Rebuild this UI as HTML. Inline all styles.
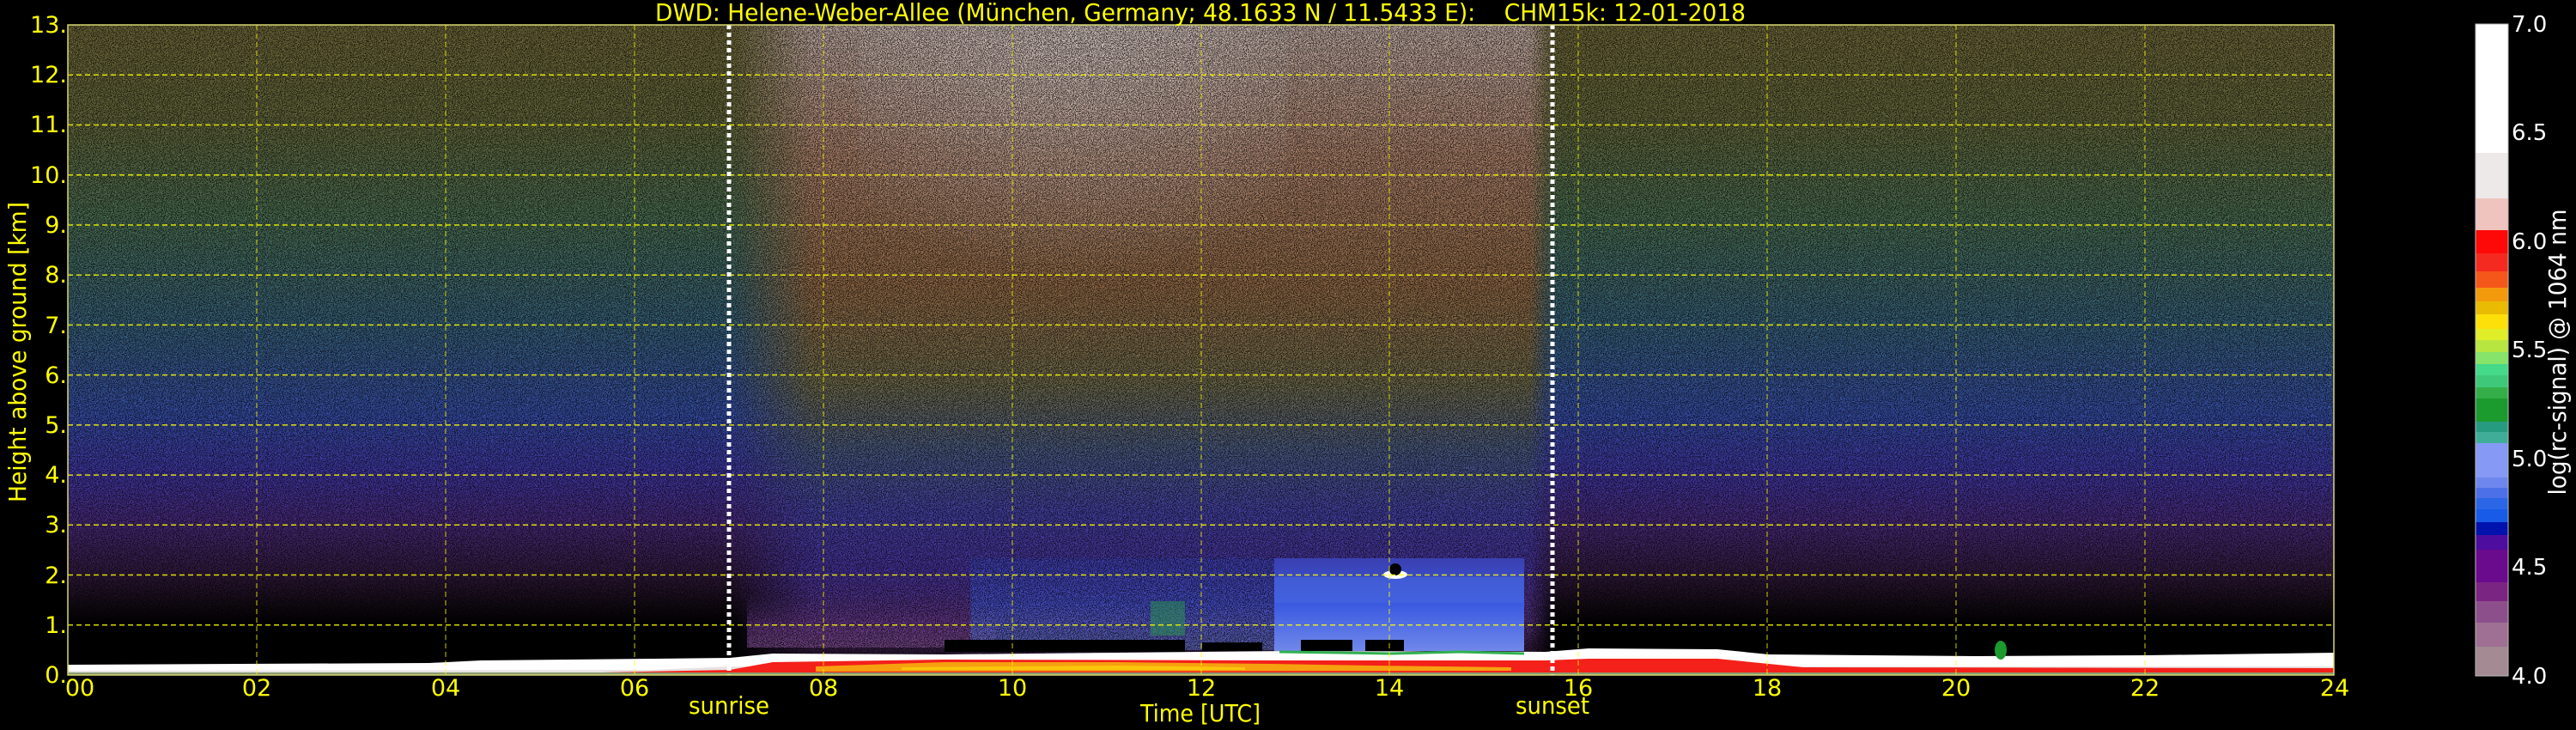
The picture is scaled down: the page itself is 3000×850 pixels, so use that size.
<!DOCTYPE html>
<html><head><meta charset="utf-8"><style>
html,body{margin:0;padding:0;background:#000;}
svg{display:block;}
text{font-family:"DejaVu Sans","Liberation Sans",sans-serif;}
</style></head><body>
<svg width="3000" height="850" viewBox="0 0 3000 850" xmlns="http://www.w3.org/2000/svg">
<defs>
<linearGradient id="night" x1="0" y1="29" x2="0" y2="786" gradientUnits="userSpaceOnUse">
<stop offset="0" stop-color="#6a6236"/>
<stop offset="0.15" stop-color="#5e6238"/>
<stop offset="0.3" stop-color="#46684e"/>
<stop offset="0.46" stop-color="#345c74"/>
<stop offset="0.6" stop-color="#344aa0"/>
<stop offset="0.69" stop-color="#3e349c"/>
<stop offset="0.77" stop-color="#462874"/>
<stop offset="0.85" stop-color="#2e1838"/>
<stop offset="0.9" stop-color="#0e080e"/>
<stop offset="0.925" stop-color="#000"/>
<stop offset="1" stop-color="#000"/>
</linearGradient>
<linearGradient id="day" x1="0" y1="29" x2="0" y2="786" gradientUnits="userSpaceOnUse">
<stop offset="0" stop-color="#b8a49c"/>
<stop offset="0.2" stop-color="#a27a64"/>
<stop offset="0.4" stop-color="#8a6442"/>
<stop offset="0.55" stop-color="#686446"/>
<stop offset="0.66" stop-color="#44547c"/>
<stop offset="0.75" stop-color="#423e9c"/>
<stop offset="0.84" stop-color="#443094"/>
<stop offset="0.92" stop-color="#52307a"/>
<stop offset="0.97" stop-color="#2a1530"/>
<stop offset="1" stop-color="#000"/>
</linearGradient>
<linearGradient id="dayMaskG" x1="0" y1="0" x2="1" y2="0">
<stop offset="0" stop-color="#fff" stop-opacity="0"/>
<stop offset="0.1" stop-color="#fff" stop-opacity="1"/>
<stop offset="0.97" stop-color="#fff" stop-opacity="1"/>
<stop offset="1" stop-color="#fff" stop-opacity="0"/>
</linearGradient>
<mask id="dayMask"><rect x="850" y="29" width="960" height="757" fill="url(#dayMaskG)"/></mask>
<radialGradient id="white" cx="0.5" cy="0" r="0.7">
<stop offset="0" stop-color="#d0c4c0" stop-opacity="0.7"/>
<stop offset="1" stop-color="#d0c4c0" stop-opacity="0"/>
</radialGradient>
<linearGradient id="blue" x1="0" y1="0" x2="0" y2="1">
<stop offset="0" stop-color="#3a40b0"/>
<stop offset="0.5" stop-color="#3a5ae0"/>
<stop offset="1" stop-color="#7088ea"/>
</linearGradient>
<linearGradient id="haze" x1="0" y1="0" x2="0" y2="1">
<stop offset="0" stop-color="#4a2a70" stop-opacity="0"/>
<stop offset="0.6" stop-color="#6a3a88"/>
<stop offset="1" stop-color="#7a4a8a"/>
</linearGradient>
<filter id="speck" x="0" y="0" width="100%" height="100%">
<feTurbulence type="fractalNoise" baseFrequency="0.95" numOctaves="1" seed="3"/>
<feColorMatrix type="matrix" values="0 0 0 0 0  0 0 0 0 0  0 0 0 0 0  12 0 0 0 -5.8"/>
<feComponentTransfer><feFuncA type="discrete" tableValues="0 1"/></feComponentTransfer>
</filter>
<filter id="speck2" x="0" y="0" width="100%" height="100%">
<feTurbulence type="fractalNoise" baseFrequency="0.8" numOctaves="1" seed="11"/>
<feColorMatrix type="matrix" values="0 0 0 0 0  0 0 0 0 0  0 0 0 0 0  0 12 0 0 -6.6"/>
<feComponentTransfer><feFuncA type="discrete" tableValues="0 1"/></feComponentTransfer>
</filter>
</defs>

<rect x="79" y="29" width="2639" height="757" fill="url(#night)"/>
<g mask="url(#dayMask)">
<rect x="850" y="29" width="960" height="757" fill="url(#day)"/>
</g>
<rect x="1000" y="29" width="500" height="420" fill="url(#white)"/>
<rect x="870" y="690" width="290" height="64" fill="url(#haze)" opacity="0.8"/>
<rect x="1130" y="650" width="354" height="107" fill="url(#blue)" opacity="0.6"/>
<rect x="79" y="29" width="2639" height="757" fill="#000" filter="url(#speck)" opacity="0.55"/>
<rect x="79" y="29" width="2639" height="757" fill="#000" filter="url(#speck2)" opacity="0.45"/>
<rect x="1484" y="650" width="291" height="108" fill="url(#blue)"/>
<rect x="1484" y="672" width="291" height="30" fill="#4868e0" opacity="0.6"/>
<rect x="1340" y="700" width="40" height="40" fill="#2a9a50" opacity="0.5"/>
<g fill="#000">
<rect x="1100" y="745" width="280" height="14"/>
<rect x="1400" y="748" width="70" height="10"/>
<rect x="1515" y="745" width="60" height="13"/>
<rect x="1590" y="745" width="45" height="13"/>
</g>

<polygon fill="#ffffff" points="79,774 500,772 560,769 760,767 850,766 900,761 1100,762 1300,760 1500,758 1800,759 1850,755 2000,756 2060,762 2300,764 2500,763 2718,760 2718,786 79,786"/>
<polygon fill="#e8e2e2" points="79,781 760,780 850,776 2718,776 2718,786 79,786"/>
<polygon fill="#f4201a" points="79,783 700,783 850,780 900,771 1100,768 1500,769 1800,769 1850,767 2000,767 2060,773 2100,777 2718,778 2718,786 79,786"/>
<polygon fill="#f6a010" points="950,776 1100,771 1300,771 1480,773 1600,775 1760,777 1760,781 950,782"/>
<polygon fill="#fde00a" opacity="0.6" points="1050,777 1300,775 1450,777 1450,780 1050,780"/>
<polyline fill="none" stroke="#30b050" stroke-width="3" points="1490,759 1560,760 1620,761 1700,759 1775,761"/>
<rect x="79" y="783" width="2639" height="3" fill="#8a9a70"/>
<ellipse cx="2330" cy="757" rx="7" ry="11" fill="#1b9a2e"/>
<ellipse cx="1625" cy="669" rx="14" ry="5" fill="#fff"/>
<ellipse cx="1625" cy="663" rx="7" ry="7" fill="#000"/>

<g stroke="#ffff00" stroke-width="1.5" stroke-dasharray="6,4" opacity="0.85">
<line x1="79" x2="2718" y1="727.8" y2="727.8"/>
<line x1="79" x2="2718" y1="669.5" y2="669.5"/>
<line x1="79" x2="2718" y1="611.3" y2="611.3"/>
<line x1="79" x2="2718" y1="553.1" y2="553.1"/>
<line x1="79" x2="2718" y1="494.9" y2="494.9"/>
<line x1="79" x2="2718" y1="436.6" y2="436.6"/>
<line x1="79" x2="2718" y1="378.4" y2="378.4"/>
<line x1="79" x2="2718" y1="320.2" y2="320.2"/>
<line x1="79" x2="2718" y1="262" y2="262"/>
<line x1="79" x2="2718" y1="203.7" y2="203.7"/>
<line x1="79" x2="2718" y1="145.5" y2="145.5"/>
<line x1="79" x2="2718" y1="87.3" y2="87.3"/>
</g>
<g stroke="#ffff00" stroke-width="1" stroke-dasharray="6,4" opacity="0.8">
<line y1="29" y2="786" x1="299" x2="299"/>
<line y1="29" y2="786" x1="519" x2="519"/>
<line y1="29" y2="786" x1="739" x2="739"/>
<line y1="29" y2="786" x1="959" x2="959"/>
<line y1="29" y2="786" x1="1179" x2="1179"/>
<line y1="29" y2="786" x1="1399" x2="1399"/>
<line y1="29" y2="786" x1="1618" x2="1618"/>
<line y1="29" y2="786" x1="1838" x2="1838"/>
<line y1="29" y2="786" x1="2058" x2="2058"/>
<line y1="29" y2="786" x1="2278" x2="2278"/>
<line y1="29" y2="786" x1="2498" x2="2498"/>
</g>
<g stroke="#ffffff" stroke-width="5" stroke-dasharray="5,4">
<line x1="849" x2="849" y1="29" y2="786"/>
<line x1="1808" x2="1808" y1="29" y2="786"/>
</g>
<rect x="79" y="29" width="2639" height="757" fill="none" stroke="#d8d870" stroke-width="1.5"/>

<text x="763" y="24" font-size="28" fill="#ffff00" xml:space="preserve" style="white-space:pre" textLength="1270" lengthAdjust="spacingAndGlyphs">DWD: Helene-Weber-Allee (München, Germany; 48.1633 N / 11.5433 E):    CHM15k: 12-01-2018</text>

<g font-size="27" fill="#ffff00" text-anchor="end">
<text x="78" y="38">13.</text>
<text x="78" y="96">12.</text>
<text x="78" y="154">11.</text>
<text x="78" y="213">10.</text>
<text x="78" y="271">9.</text>
<text x="78" y="329">8.</text>
<text x="78" y="388">7.</text>
<text x="78" y="446">6.</text>
<text x="78" y="504">5.</text>
<text x="78" y="562">4.</text>
<text x="78" y="620">3.</text>
<text x="78" y="679">2.</text>
<text x="78" y="737">1.</text>
<text x="78" y="795">0.</text>
</g>
<text transform="translate(30,410) rotate(-90)" font-size="28" fill="#ffff00" text-anchor="middle" textLength="350" lengthAdjust="spacingAndGlyphs">Height above ground [km]</text>

<g font-size="27" fill="#ffff00" text-anchor="middle">
<text x="93" y="810">00</text>
<text x="299" y="810">02</text>
<text x="519" y="810">04</text>
<text x="739" y="810">06</text>
<text x="959" y="810">08</text>
<text x="1179" y="810">10</text>
<text x="1399" y="810">12</text>
<text x="1618" y="810">14</text>
<text x="1838" y="810">16</text>
<text x="2058" y="810">18</text>
<text x="2278" y="810">20</text>
<text x="2498" y="810">22</text>
<text x="2719" y="810">24</text>
</g>
<text x="849" y="831" font-size="28" fill="#ffff00" text-anchor="middle" textLength="94" lengthAdjust="spacingAndGlyphs">sunrise</text>
<text x="1808" y="831" font-size="28" fill="#ffff00" text-anchor="middle" textLength="86" lengthAdjust="spacingAndGlyphs">sunset</text>
<text x="1398" y="840" font-size="28" fill="#ffff00" text-anchor="middle" textLength="140" lengthAdjust="spacingAndGlyphs">Time [UTC]</text>

<g>
<rect x="2883" y="28" width="38" height="150" fill="#ffffff"/>
<rect x="2883" y="178" width="38" height="53" fill="#ede9e8"/>
<rect x="2883" y="231" width="38" height="37" fill="#f0c4be"/>
<rect x="2883" y="268" width="38" height="27" fill="#ff0808"/>
<rect x="2883" y="295" width="38" height="21" fill="#f42a20"/>
<rect x="2883" y="316" width="38" height="19" fill="#f5561a"/>
<rect x="2883" y="335" width="38" height="16" fill="#f39a0c"/>
<rect x="2883" y="351" width="38" height="15" fill="#e9bb03"/>
<rect x="2883" y="366" width="38" height="17" fill="#fde00a"/>
<rect x="2883" y="383" width="38" height="13" fill="#dfee28"/>
<rect x="2883" y="396" width="38" height="14" fill="#b8e641"/>
<rect x="2883" y="410" width="38" height="14" fill="#86e46a"/>
<rect x="2883" y="424" width="38" height="13" fill="#45d98a"/>
<rect x="2883" y="437" width="38" height="14" fill="#3ec87a"/>
<rect x="2883" y="451" width="38" height="13" fill="#34ae48"/>
<rect x="2883" y="464" width="38" height="27" fill="#1b9a2e"/>
<rect x="2883" y="491" width="38" height="12" fill="#279b80"/>
<rect x="2883" y="503" width="38" height="13" fill="#40ad98"/>
<rect x="2883" y="516" width="38" height="40" fill="#8699f5"/>
<rect x="2883" y="556" width="38" height="12" fill="#6e87ec"/>
<rect x="2883" y="568" width="38" height="12" fill="#4c70e8"/>
<rect x="2883" y="580" width="38" height="13" fill="#2a66e6"/>
<rect x="2883" y="593" width="38" height="15" fill="#185be9"/>
<rect x="2883" y="608" width="38" height="15" fill="#0012ae"/>
<rect x="2883" y="623" width="38" height="17" fill="#4d0d9f"/>
<rect x="2883" y="640" width="38" height="38" fill="#6a0a8d"/>
<rect x="2883" y="678" width="38" height="22" fill="#7b2583"/>
<rect x="2883" y="700" width="38" height="25" fill="#8d4f8b"/>
<rect x="2883" y="725" width="38" height="28" fill="#9f7093"/>
<rect x="2883" y="753" width="38" height="34" fill="#a38a93"/>
<rect x="2883" y="28" width="38" height="759" fill="none" stroke="#bbbbbb" stroke-width="1"/>
</g>
<g font-size="26" fill="#ffffff">
<text x="2925" y="37">7.0</text>
<text x="2925" y="163">6.5</text>
<text x="2925" y="290">6.0</text>
<text x="2925" y="416">5.5</text>
<text x="2925" y="543">5.0</text>
<text x="2925" y="669">4.5</text>
<text x="2925" y="796">4.0</text>
</g>
<text transform="translate(2988,410) rotate(-90)" font-size="28" fill="#ffffff" text-anchor="middle" textLength="333" lengthAdjust="spacingAndGlyphs">log(rc-signal) @ 1064 nm</text>
</svg>
</body></html>
